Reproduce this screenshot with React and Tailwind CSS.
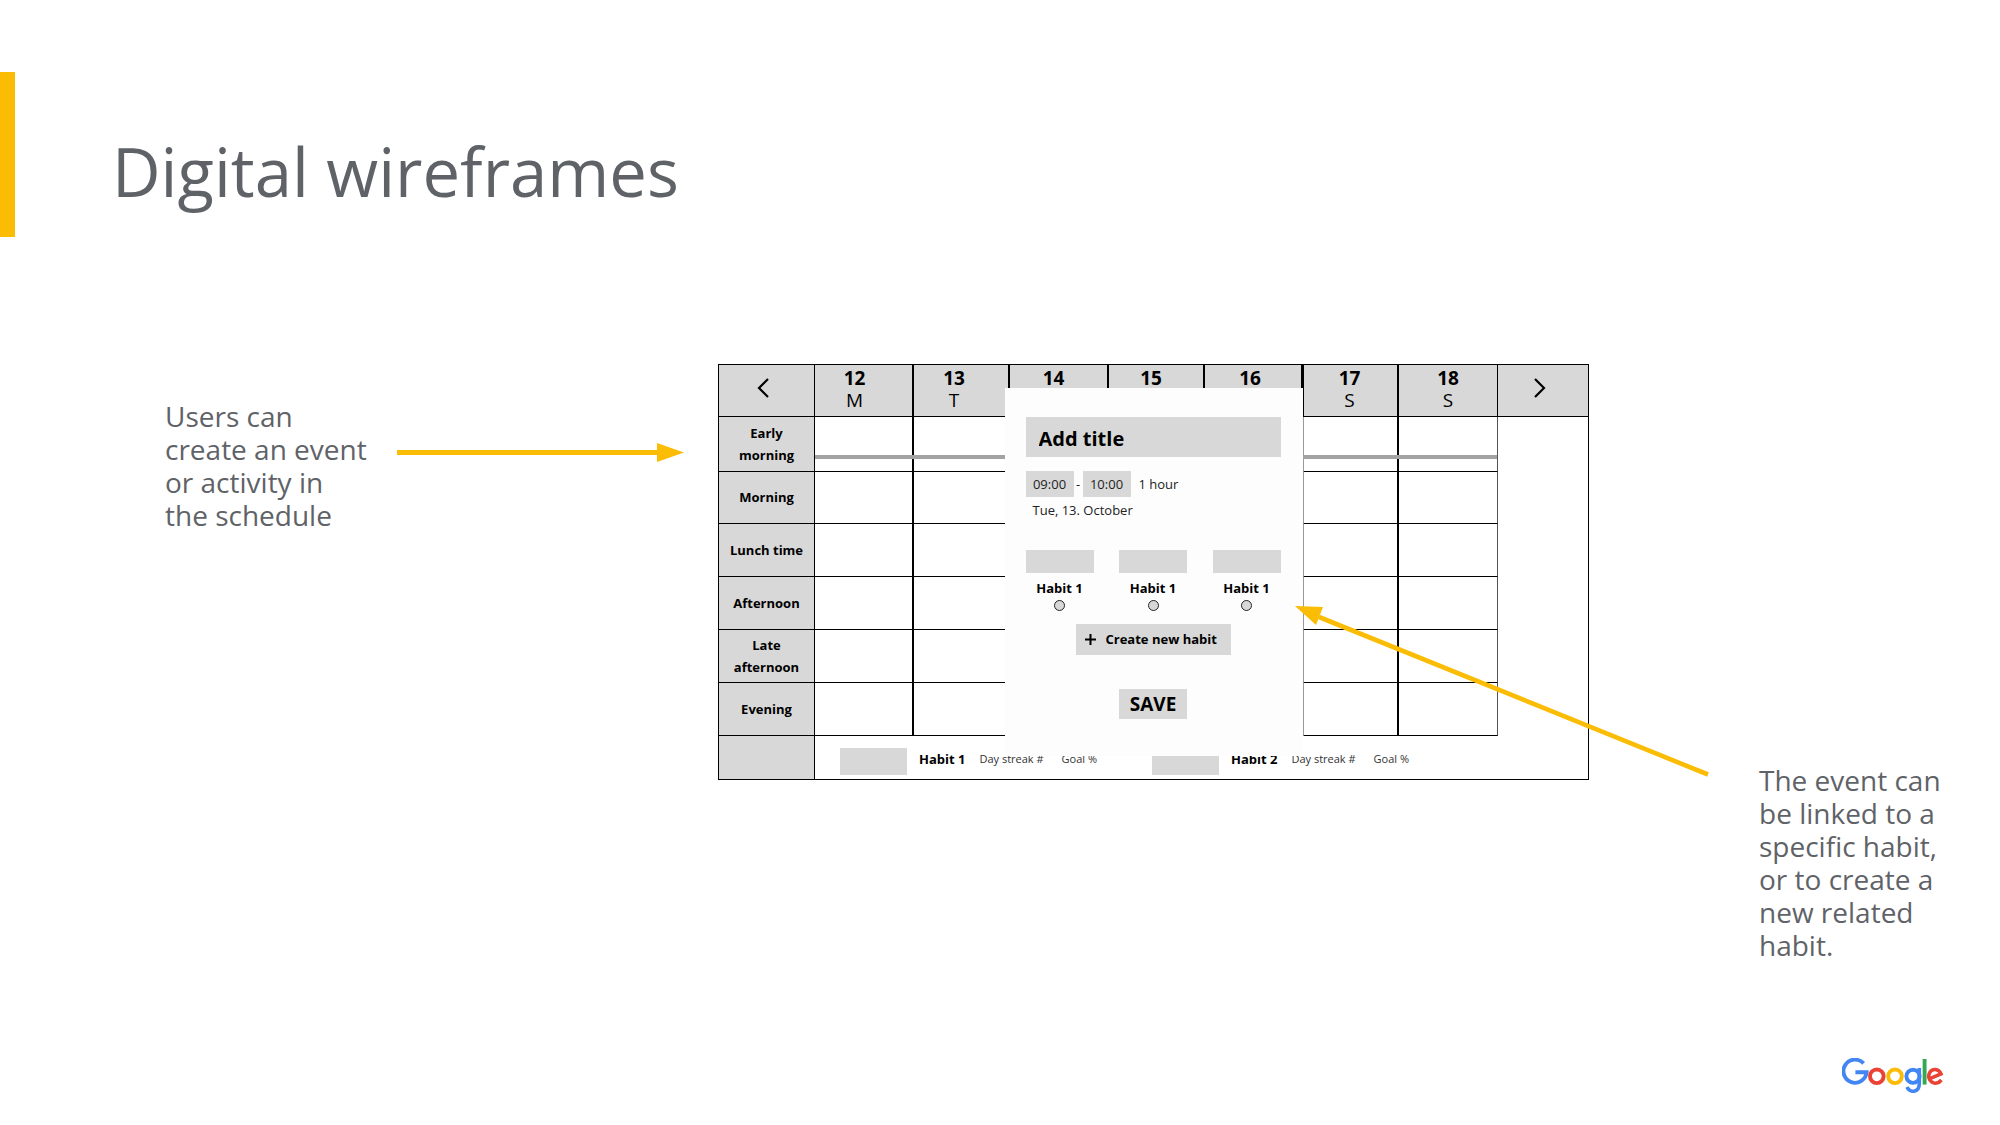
import React, { useState } from 'react';

const days = [
  { date: '12', day: 'M', cell: 'w-[99px] border-r-2 pr-[18px]' },
  { date: '13', day: 'T', cell: 'w-[96px] border-r-2 pr-[14px]' },
  { date: '14', day: 'W', cell: 'w-[99px] border-r-2 pr-2.5' },
  { date: '15', day: 'T', cell: 'w-[96px] border-r-2 pr-2.5' },
  { date: '16', day: 'F', cell: 'w-[99px] border-r-[3px] pr-1.5' },
  { date: '17', day: 'S', cell: 'w-[95px] border-r-2 pr-0.5' },
  { date: '18', day: 'S', cell: 'w-[99px] border-r' },
];

const periods = [
  { label: 'Early morning', height: 'h-[55px]' },
  { label: 'Morning', height: 'h-[52px]' },
  { label: 'Lunch time', height: 'h-[53px]' },
  { label: 'Afternoon', height: 'h-[53px]' },
  { label: 'Late afternoon', height: 'h-[53px]' },
  { label: 'Evening', height: 'h-[53px]' },
];

const slotBorders = [
  'border-r-2 border-r-black',
  'border-r-2 border-r-black',
  'border-r-2 border-r-black',
  'border-r-2 border-r-black',
  'border-r-[3px] border-r-[#999999]',
  'border-r-2 border-r-black',
  'border-r border-r-[#555555]',
];

const Chevron = ({ points }) => (
  <svg className="w-3 h-5" viewBox="0 0 12 20" fill="none" stroke="#000" strokeWidth="2.2">
    <polyline points={points} />
  </svg>
);

const HabitSummary = ({ name }) => (
  <div className="flex items-center w-[312px]">
    <div className="w-[67px] h-[27px] mr-3 bg-[#d8d8d8]" />
    <span className="text-[13px] leading-4 font-bold mb-1.5">{name}</span>
    <span className="text-[11px] leading-4 text-[#333333] ml-3.5 mb-1.5">Day streak #</span>
    <span className="text-[11px] leading-4 text-[#333333] ml-[18px] mb-1.5">Goal %</span>
  </div>
);

const Schedule = () => (
  <table className="w-full table-fixed border-separate border-spacing-0 text-black">
    <thead>
      <tr className="h-[52px] bg-[#d8d8d8]">
        <th className="w-[96px] p-0 pt-[13px] align-top border-r border-b border-black">
          <button type="button" aria-label="Previous week" className="block mx-auto pr-2">
            <Chevron points="11,1 2,10 11,19" />
          </button>
        </th>
        {days.map(({ date, day, cell }) => (
          <th key={date} className={`${cell} pt-0.5 align-top border-b border-black text-[19px] leading-[22px] font-normal`}>
            <span className="block font-bold">{date}</span>
            <span className="block">{day}</span>
          </th>
        ))}
        <th className="w-[90px] p-0 pt-[13px] align-top border-b border-black">
          <button type="button" aria-label="Next week" className="block mx-auto pr-1.5">
            <Chevron points="1,1 10,10 1,19" />
          </button>
        </th>
      </tr>
    </thead>
    <tbody>
      {periods.map(({ label, height }, row) => (
        <tr key={label} className={height}>
          <th className="px-2.5 pt-0 pb-px bg-[#d8d8d8] border-r border-b border-black text-[13px] leading-[22px] font-bold">
            {label}
          </th>
          {slotBorders.map((border, i) => (
            <td key={i} className={`p-0 border-b border-b-black ${border}`} />
          ))}
          {row === 0 && <td rowSpan={periods.length} className="p-0" />}
        </tr>
      ))}
      <tr className="h-[43px]">
        <td className="p-0 bg-[#d8d8d8] border-r border-black" />
        <td colSpan={8} className="p-0 pl-[25px] pt-2">
          <div className="flex">
            <HabitSummary name="Habit 1" />
            <HabitSummary name="Habit 2" />
          </div>
        </td>
      </tr>
    </tbody>
  </table>
);

const EventDialog = () => {
  const [title, setTitle] = useState('Add title');
  const [start, setStart] = useState('09:00');
  const [end, setEnd] = useState('10:00');

  return (
    <form
      aria-label="New event"
      onSubmit={(e) => e.preventDefault()}
      className="absolute inset-x-0 top-[23px] mx-auto w-[298px] h-[368px] pl-[21px] pr-[22px] pt-[29px] flex flex-col bg-[#fdfdfd] text-black"
    >
      <input
        aria-label="Title"
        value={title}
        onChange={(e) => setTitle(e.target.value)}
        className="w-full h-10 pl-[13px] pt-0.5 bg-[#d8d8d8] text-[20px] font-bold"
      />
      <div className="flex items-center mt-[14px] text-[13px] leading-[18px] text-[#222222]">
        <input
          aria-label="Start time"
          value={start}
          onChange={(e) => setStart(e.target.value)}
          className="w-12 h-[26px] bg-[#d8d8d8] text-center"
        />
        <span className="w-[9px] text-center">-</span>
        <input
          aria-label="End time"
          value={end}
          onChange={(e) => setEnd(e.target.value)}
          className="w-12 h-[26px] bg-[#d8d8d8] text-center"
        />
        <span className="ml-2">1 hour</span>
      </div>
      <p className="mt-1 pl-[7px] text-[13px] leading-[18px] text-[#222222]">Tue, 13. October</p>

      <div className="flex justify-between mt-[31px]">
        {['first', 'second', 'third'].map((id) => (
          <label key={id} className="w-[68px] flex flex-col items-center text-[13px] leading-[18px] font-bold">
            <span className="block w-full h-[23px] mb-1.5 bg-[#d8d8d8]" />
            Habit 1
            <input
              type="radio"
              name="habit"
              value={id}
              className="appearance-none w-[11px] h-[11px] mt-[3px] rounded-full border border-[#222222] bg-[#d8d8d8]"
            />
          </label>
        ))}
      </div>

      <button type="button" className="self-center mt-[13px] w-[155px] h-[31px] flex items-center pl-[9px] gap-2.5 bg-[#d8d8d8] text-[13px] font-bold">
        <svg className="w-[11px] h-[11px]" viewBox="0 0 11 11" stroke="#000" strokeWidth="2">
          <path d="M5.5 0V11M0 5.5H11" />
        </svg>
        Create new habit
      </button>
      <button type="submit" className="self-center mt-[34px] w-[68px] h-[30px] bg-[#d8d8d8] text-[19px] leading-[30px] font-bold">
        SAVE
      </button>
    </form>
  );
};

const GoogleLogo = () => (
  <svg className="w-[101px] h-[35px]" viewBox="0 0 101 35" fill="none" strokeWidth="3.9" role="img" aria-label="Google">
    <path d="M21.6 5.4A11.6 11.6 0 1 0 24.6 14.2H13.4" stroke="#4285f4" />
    <circle cx="34.8" cy="18.3" r="6.8" stroke="#ea4335" />
    <circle cx="53" cy="18.3" r="6.8" stroke="#fbbc05" />
    <circle cx="71" cy="18.3" r="6.6" stroke="#4285f4" />
    <path d="M77.3 10V25.8C77.3 34.8 67.4 35.4 65 29" stroke="#4285f4" strokeWidth="3.6" />
    <path d="M82.6 1V26.6" stroke="#34a853" />
    <path d="M87.2 20.8L99 15.9C96.6 10.4 90.4 10.3 87.8 14.4C83.6 22.6 93.4 29.4 99.4 22" stroke="#ea4335" strokeWidth="3.6" />
  </svg>
);

export default function App() {
  return (
    <div className="min-h-screen flex flex-col bg-white text-[#5f6368] font-['Open_Sans','Noto_Sans',sans-serif]">
      <header className="mt-[72px] h-[165px] pt-[34px] pl-[97px] flex items-center border-l-[15px] border-[#fbbc05]">
        <h1 className="text-[67px] leading-none">Digital wireframes</h1>
      </header>

      <main className="mt-[127px] grid grid-cols-[718fr_871fr_411fr] items-start">
        <div className="flex items-start gap-6 pt-9 pl-[165px] pr-[34px]">
          <p className="w-[208px] shrink-0 text-[28px] leading-[33px]">
            Users can create an event or activity in the schedule
          </p>
          <div className="flex-1 flex items-center mt-[43px]">
            <div className="flex-1 h-[5px] bg-[#fbbc05]" />
            <svg className="w-[27px] h-[19px]" viewBox="0 0 27 19" fill="#fbbc05">
              <polygon points="0,0 27,9.5 0,19" />
            </svg>
          </div>
        </div>

        <div className="relative border border-black">
          <Schedule />
          <div className="absolute left-[11%] right-[10.5%] top-[90px] h-1 bg-[#a3a3a3]" />
          <EventDialog />
          <svg className="absolute left-[66%] top-60 w-[418px] h-[176px]" viewBox="0 0 418 176">
            <path d="M26 12L415 169.5" stroke="#fbbc05" strokeWidth="4.6" />
            <polygon points="2,1 30,2 23,20" fill="#fbbc05" />
          </svg>
        </div>

        <div className="pt-[400px] pl-[170px]">
          <p className="w-[190px] text-[28px] leading-[33px]">
            The event can be linked to a specific habit, or to create a new related habit.
          </p>
        </div>
      </main>

      <footer className="mt-auto flex justify-end pr-[57px] pb-8">
        <GoogleLogo />
      </footer>
    </div>
  );
}
